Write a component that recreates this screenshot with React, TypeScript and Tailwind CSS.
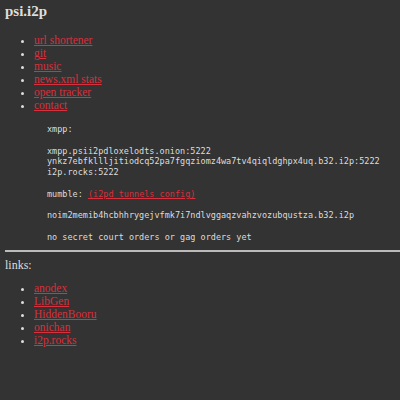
export default function App() {
  const serif = { fontFamily: '"Liberation Serif", "Times New Roman", serif' };
  const links1 = ["url shortener", "git", "music", "news.xml stats", "open tracker", "contact"];
  const links2 = ["anodex", "LibGen", "HiddenBooru", "onichan", "i2p.rocks"];
  return (
    <div className="min-h-[400px] w-[400px] bg-[#333333] text-[#dddddd] pl-[5px] pt-[3px] overflow-hidden" style={serif}>
      <h1 className="text-[15px] font-bold leading-[17px] m-0">psi.i2p</h1>
      <ul className="list-disc pl-[29px] mt-[14px] text-[11.5px] leading-[13px]">
        {links1.map((l) => (
          <li key={l}>
            <a href="#" className="text-[#d8303c] underline">{l}</a>
          </li>
        ))}
      </ul>
      <pre
        className="ml-[42px] mt-[12px] text-[8.5px] leading-[10.8px] text-[#dddddd] whitespace-pre"
        style={{ fontFamily: '"DejaVu Sans Mono", "Liberation Mono", monospace' }}
      >
{`xmpp:

xmpp.psii2pdloxelodts.onion:5222
ynkz7ebfkllljitiodcq52pa7fgqziomz4wa7tv4qiqldghpx4uq.b32.i2p:5222
i2p.rocks:5222

mumble: `}<a href="#" className="text-[#d8303c] underline">(i2pd tunnels config)</a>{`

noim2memib4hcbhhrygejvfmk7i7ndlvggaqzvahzvozubqustza.b32.i2p

no secret court orders or gag orders yet`}
      </pre>
      <hr className="mt-[7px] border-0 h-[2px] bg-[#bbbbbb]" />
      <div className="mt-[6px] text-[12px] leading-[14px]">links:</div>
      <ul className="list-disc pl-[29px] mt-[10px] text-[11.5px] leading-[13px]">
        {links2.map((l) => (
          <li key={l}>
            <a href="#" className="text-[#d8303c] underline">{l}</a>
          </li>
        ))}
      </ul>
    </div>
  );
}
